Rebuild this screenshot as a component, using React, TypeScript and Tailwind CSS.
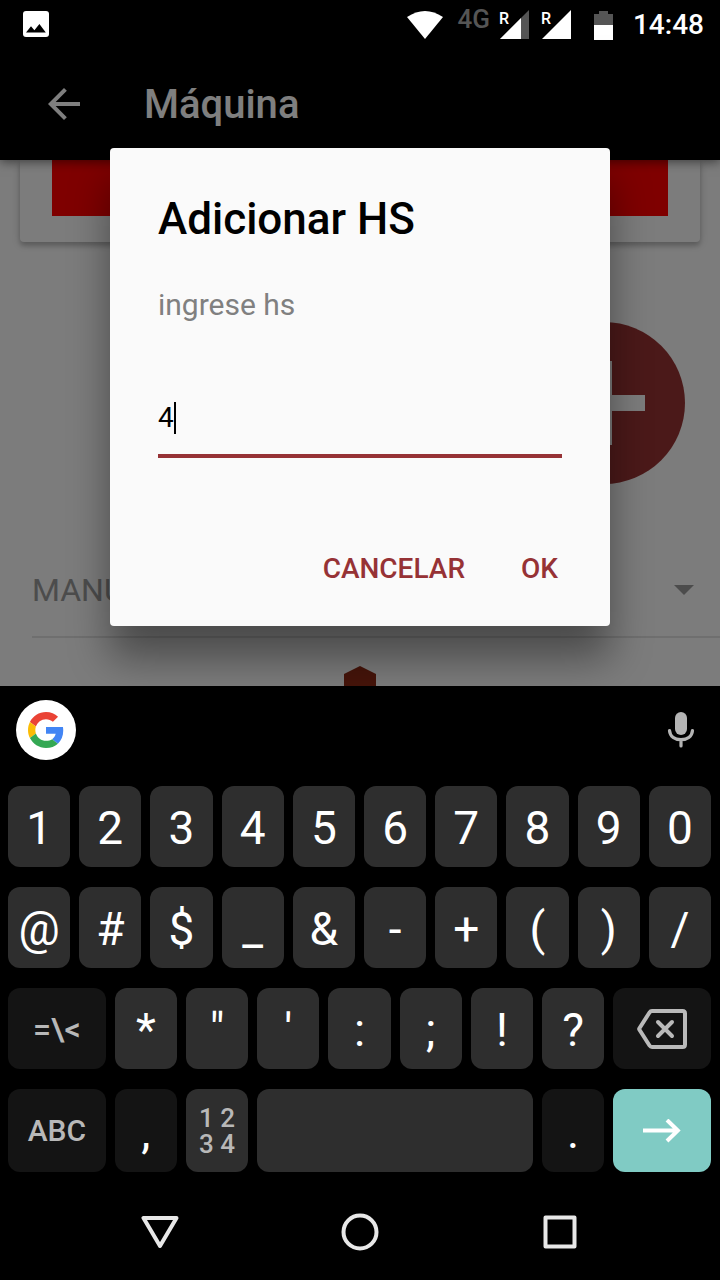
import { useState, type ReactNode } from "react";
import { MdArrowBack } from "react-icons/md";

function SignalIcon({ partial = false }: { partial?: boolean }) {
  return (
    <svg viewBox="0 0 30 30" className="h-[30px] w-[30px] shrink-0 overflow-visible" aria-hidden="true">
      <text x="-1" y="14" fontSize="16" fontWeight="500" fontFamily="Roboto, sans-serif" fill="#fff">
        R
      </text>
      <path d="M0 29 L29 0 V29 Z" fill={partial ? "#555" : "#fff"} />
      {partial && <path d="M0 29 L21 8 V29 Z" fill="#fff" />}
    </svg>
  );
}

function GoogleLogo() {
  return (
    <svg viewBox="0 0 48 48" className="h-9 w-9" aria-hidden="true">
      <path
        fill="#EA4335"
        d="M24 9.500c3.540 0 6.710 1.220 9.210 3.600l6.850-6.850C35.900 2.380 30.470 0 24 0 14.620 0 6.510 5.380 2.560 13.220l7.980 6.190C12.430 13.720 17.740 9.500 24 9.500z"
      />
      <path
        fill="#4285F4"
        d="M46.980 24.550c0-1.570-.15-3.090-.38-4.550H24v9.020h12.940c-.58 2.960-2.260 5.480-4.780 7.180l7.730 6c4.510-4.180 7.090-10.360 7.090-17.650z"
      />
      <path
        fill="#FBBC05"
        d="M10.530 28.590c-.48-1.450-.76-2.990-.76-4.590s.27-3.140.76-4.590l-7.980-6.190C.92 16.460 0 20.120 0 24c0 3.880.92 7.540 2.560 10.780l7.970-6.190z"
      />
      <path
        fill="#34A853"
        d="M24 48c6.480 0 11.930-2.130 15.890-5.810l-7.730-6c-2.150 1.450-4.920 2.300-8.160 2.300-6.260 0-11.570-4.220-13.470-9.910l-7.980 6.190C6.510 42.620 14.620 48 24 48z"
      />
    </svg>
  );
}

function StatusBar() {
  return (
    <div className="flex h-12 shrink-0 items-center justify-between bg-black pr-4 pl-[23px] text-white">
      <svg viewBox="0 0 26 26" className="h-[26px] w-[26px]" role="img" aria-label="Imagen">
        <rect width="26" height="26" rx="3" fill="#fff" />
        <path d="M3 21.5 L8 15.3 L11.4 19.3 L16.4 13 L22.8 21.5 Z" fill="#000" />
      </svg>
      <div className="flex items-center pt-0.5">
        <svg viewBox="0 0 36 28" className="h-7 w-9 shrink-0" aria-hidden="true">
          <path d="M0 6 Q18 -6 36 6 L18 28 Z" fill="#fff" />
        </svg>
        <span className="ml-3.5 self-start text-[26px] leading-5 font-medium text-[#555]">4G</span>
        <span className="ml-2.5">
          <SignalIcon partial />
        </span>
        <span className="ml-3">
          <SignalIcon />
        </span>
        <svg viewBox="0 0 19 29" className="ml-[22px] h-[29px] w-[19px] shrink-0" aria-hidden="true">
          <path d="M5 0 H14 V3 H19 V14 H0 V3 H5 Z" fill="#555" />
          <path d="M0 14 H19 V29 H0 Z" fill="#fff" />
        </svg>
        <time className="ml-5 text-[28px] leading-8 font-medium">14:48</time>
      </div>
    </div>
  );
}

function Machine() {
  return (
    <main className="min-h-0 flex-1 overflow-hidden bg-[#f8f8f8]">
      <section className="mx-5 h-[82px] rounded-b bg-[#f9f9f9] px-8 shadow-[0_4px_4px_rgba(0,0,0,0.14),0_2px_8px_rgba(0,0,0,0.2)]">
        <div className="h-14 bg-[#ff0000]" />
      </section>
      <div className="mt-20 flex justify-end pr-[35px]">
        <button
          type="button"
          aria-label="Adicionar"
          className="flex h-[162px] w-[162px] items-center justify-center rounded-full bg-[#963333]"
        >
          <svg viewBox="0 0 84 84" className="h-[84px] w-[84px]" aria-hidden="true">
            <path d="M34 0 H50 V34 H83 V50 H50 V84 H34 V50 H1 V34 H34 Z" fill="#f8f8f8" />
          </svg>
        </button>
      </div>
      <div className="mt-[60px] ml-8 flex items-center border-b-2 border-[#dedede] pr-[26px]">
        <select
          aria-label="Tipo"
          className="h-[92px] flex-1 appearance-none bg-transparent text-[32px] text-[#999]"
        >
          <option>MANU</option>
        </select>
        <svg viewBox="0 0 20 10" className="h-2.5 w-5" aria-hidden="true">
          <path d="M0 0 H20 L10 10 Z" fill="#999" />
        </svg>
      </div>
      <svg viewBox="0 0 32 36" className="mx-auto mt-7 h-9 w-8" aria-hidden="true">
        <path d="M16 0 L32 8 V28 L16 36 L0 28 V8 Z" fill="#8c2814" />
      </svg>
    </main>
  );
}

function HoursDialog() {
  const [hours, setHours] = useState("4");
  return (
    <div className="absolute inset-0 flex items-center justify-center bg-black/50 pt-10">
      <form
        role="dialog"
        aria-labelledby="dialog-title"
        onSubmit={(event) => event.preventDefault()}
        className="w-[500px] max-w-full rounded bg-[#fafafa] pt-[45px] pb-[21px] shadow-[0_32px_40px_rgba(0,0,0,0.4)]"
      >
        <div className="px-12">
          <h2 id="dialog-title" className="text-[44px] leading-[52px] font-medium text-black">
            Adicionar HS
          </h2>
          <label htmlFor="hours" className="mt-10 block text-[30px] leading-10 text-[#808080]">
            ingrese hs
          </label>
          <div className="relative mt-[57px] border-b-4 border-[#963235]">
            <input
              id="hours"
              inputMode="decimal"
              value={hours}
              onChange={(event) => setHours(event.target.value)}
              className="block h-[72px] w-full bg-transparent pb-0.5 text-[28px] text-black caret-transparent outline-none"
            />
            <span className="absolute top-5 left-4 h-8 w-0.5 bg-black" aria-hidden="true" />
          </div>
        </div>
        <div className="mt-[75px] flex justify-end gap-4 pr-8 text-[28px] font-medium text-[#963235]">
          <button type="button" className="h-[72px] px-5">
            CANCELAR
          </button>
          <button type="submit" className="h-[72px] px-5">
            OK
          </button>
        </div>
      </form>
    </div>
  );
}

function Key({
  children,
  className = "col-span-2 bg-[#2e2e2e] pt-0.5 text-[46px] text-white",
  label,
}: {
  children?: ReactNode;
  className?: string;
  label?: string;
}) {
  return (
    <button
      type="button"
      aria-label={label}
      className={`flex items-center justify-center rounded-xl leading-none ${className}`}
    >
      {children}
    </button>
  );
}

function Keyboard() {
  return (
    <section aria-label="Teclado" className="shrink-0 bg-black pb-3">
      <div className="flex h-[100px] items-start justify-between pt-3.5 pr-5 pl-4">
        <button
          type="button"
          aria-label="Google"
          className="flex h-[60px] w-[60px] items-center justify-center rounded-full bg-white"
        >
          <GoogleLogo />
        </button>
        <button type="button" aria-label="Voz" className="flex h-[60px] items-center">
          <svg viewBox="0 0 38 36" className="h-9 w-[38px]" aria-hidden="true">
            <rect x="13" y="0" width="12" height="23" rx="6" fill="#b4b4b4" />
            <path
              d="M7.5 18.5 C8 24.5 13 27.7 19 27.7 S30 24.5 30.5 18.5 M19 28 V34"
              fill="none"
              stroke="#b4b4b4"
              strokeWidth="3.2"
              strokeLinecap="round"
            />
          </svg>
        </button>
      </div>
      <div className="grid grid-cols-20 grid-rows-[81px_81px_81px_83px] gap-x-[9px] gap-y-5 pr-[9px] pl-2">
        {Array.from("1234567890@#$_&-+()/").map((character) => (
          <Key key={character}>{character}</Key>
        ))}
        <Key className="col-span-3 bg-[#141414] text-[32px] font-medium text-[#b8b8b8]">{"=\\<"}</Key>
        {Array.from("*\"':;!?").map((character) => (
          <Key key={character}>{character}</Key>
        ))}
        <Key label="Borrar" className="col-span-3 bg-[#141414]">
          <svg viewBox="0 0 50 40" className="h-10 w-[50px]" fill="none" stroke="#bababa" aria-hidden="true">
            <path
              d="M15 2 H45.5 Q48 2 48 4.500 V35.500 Q48 38 45.500 38 H15 Q13.500 38 12.500 36.500 L2.300 20.500 Q2 20 2.300 19.500 L12.500 3.500 Q13.500 2 15 2 Z"
              strokeWidth="4"
            />
            <path d="M21 13 L35 27 M35 13 L21 27" strokeWidth="4" strokeLinecap="round" />
          </svg>
        </Key>
        <Key className="col-span-3 bg-[#141414] text-[30px] font-medium text-[#b8b8b8]">ABC</Key>
        <Key className="col-span-2 bg-[#141414] pt-0.5 text-[46px] text-white">,</Key>
        <Key label="1234" className="col-span-2 bg-[#2e2e2e] text-[26px] font-medium text-[#b8b8b8]">
          <span className="whitespace-pre">{"1 2\n3 4"}</span>
        </Key>
        <Key label="Espacio" className="col-span-8 bg-[#2e2e2e]" />
        <Key className="col-span-2 bg-[#141414] pt-0.5 text-[46px] text-white">.</Key>
        <Key label="Siguiente" className="col-span-3 bg-[#80cbc4]">
          <svg viewBox="0 0 38 24" className="h-6 w-[38px]" fill="none" stroke="#fff" strokeWidth="4" aria-hidden="true">
            <path d="M0 11.500 H35 M24 1 L34.800 11.500 L24 22" />
          </svg>
        </Key>
      </div>
    </section>
  );
}

function NavigationBar() {
  return (
    <nav className="grid h-24 shrink-0 grid-cols-3 bg-black px-[60px]">
      <button type="button" aria-label="Atrás" className="flex items-center justify-center">
        <svg viewBox="0 0 38 34" className="h-[34px] w-[38px]" fill="none" stroke="#e8e8e8" strokeWidth="4" strokeLinejoin="round" aria-hidden="true">
          <path d="M2.500 3 H35.500 L19 31 Z" />
        </svg>
      </button>
      <button type="button" aria-label="Inicio" className="flex items-center justify-center">
        <svg viewBox="0 0 38 38" className="h-[38px] w-[38px]" fill="none" stroke="#e8e8e8" strokeWidth="4" aria-hidden="true">
          <circle cx="19" cy="19" r="16.500" />
        </svg>
      </button>
      <button type="button" aria-label="Recientes" className="flex items-center justify-center">
        <svg viewBox="0 0 34 34" className="h-[34px] w-[34px]" fill="none" stroke="#e8e8e8" strokeWidth="4" strokeLinejoin="round" aria-hidden="true">
          <rect x="2.500" y="2.500" width="29" height="29" />
        </svg>
      </button>
    </nav>
  );
}

export default function App() {
  return (
    <div className="flex h-screen flex-col bg-black font-['Roboto',sans-serif]">
      <StatusBar />
      <div className="relative flex min-h-0 flex-1 flex-col">
        <header className="relative flex h-28 shrink-0 items-center bg-black pl-10 text-white shadow-[0_2px_10px_rgba(0,0,0,0.5)]">
          <button type="button" aria-label="Volver">
            <MdArrowBack size={48} />
          </button>
          <h1 className="ml-14 pt-0.5 text-[40px] leading-[48px] font-medium">Máquina</h1>
        </header>
        <Machine />
        <HoursDialog />
      </div>
      <Keyboard />
      <NavigationBar />
    </div>
  );
}
